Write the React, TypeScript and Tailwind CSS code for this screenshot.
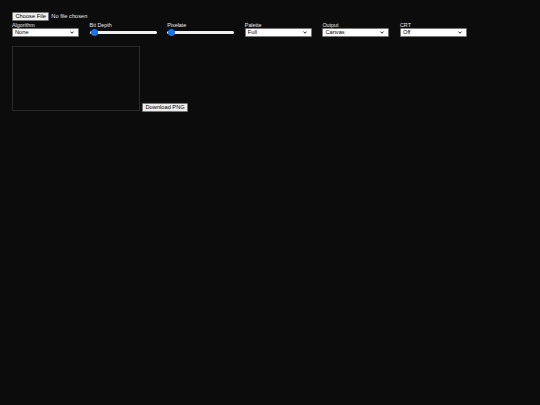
import React from "react";

const columns: { label: string; kind: "select" | "range"; value?: string }[] = [
  { label: "Algorithm", kind: "select", value: "None" },
  { label: "Bit Depth", kind: "range" },
  { label: "Pixelate", kind: "range" },
  { label: "Palette", kind: "select", value: "Full" },
  { label: "Output", kind: "select", value: "Canvas" },
  { label: "CRT", kind: "select", value: "Off" },
];

function Chevron() {
  return (
    <svg width="4" height="3" viewBox="0 0 10 8" className="shrink-0">
      <path d="M1 1.5 L5 6 L9 1.5" fill="none" stroke="#222" strokeWidth="2.6" />
    </svg>
  );
}

function FakeSelect({ value }: { value: string }) {
  return (
    <div className="flex h-[9px] w-[67px] items-center justify-between rounded-[1px] border border-[#767676] bg-white pl-[2px] pr-[4px] text-[5.7px] leading-none text-black">
      <span>{value}</span>
      <Chevron />
    </div>
  );
}

function FakeRange() {
  return (
    <div className="relative flex h-[9px] w-[67px] items-center">
      <div className="h-[3px] w-full rounded-full bg-[#efefef]" />
      <div className="absolute left-[1px] top-[1px] h-[7px] w-[7px] rounded-full bg-[#1a73e8]" />
    </div>
  );
}

export default function App() {
  return (
    <div className="min-h-screen bg-[#0c0c0c] pl-[12px] pt-[12px] font-['Liberation_Sans',Arial,sans-serif] text-[#e8e8e8]">
      <div className="flex h-[9px] items-center gap-[2px]">
        <button className="flex h-[9px] items-center rounded-[1px] border border-[#767676] bg-[#efefef] px-[2.5px] text-[5.7px] leading-none text-black">
          Choose File
        </button>
        <span className="text-[5.7px] leading-none">No file chosen</span>
      </div>

      <div className="mt-[1px] flex gap-[10.6px]">
        {columns.map((c) => (
          <div key={c.label} className="flex w-[67px] flex-col">
            <div className="h-[6px] text-[5.4px] leading-[6px]">{c.label}</div>
            {c.kind === "select" ? <FakeSelect value={c.value ?? ""} /> : <FakeRange />}
          </div>
        ))}
      </div>

      <div className="mt-[9px] flex items-end gap-[2px]">
        <div className="h-[65px] w-[128px] border border-[#2a2a2a]" />
        <button className="mb-[-1px] flex h-[9px] items-center rounded-[1px] border border-[#767676] bg-[#efefef] px-[2.5px] text-[5.7px] leading-none text-black">
          Download PNG
        </button>
      </div>
    </div>
  );
}
